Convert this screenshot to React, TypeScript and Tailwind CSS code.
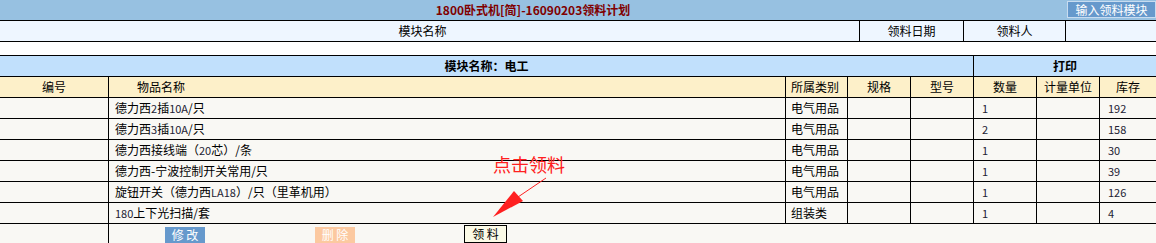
const font = { fontFamily: '"Noto Sans CJK SC", "Noto Sans", sans-serif' };

type Item = { name: React.ReactNode; kind: string; qty: string; stock: string };

const N = ({ children }: { children: React.ReactNode }) => (
  <span className="text-[11px] text-[#223]">{children}</span>
);

const items: Item[] = [
  { name: <>德力西<N>2</N>插<N>10A</N>/只</>, kind: "电气用品", qty: "1", stock: "192" },
  { name: <>德力西<N>3</N>插<N>10A</N>/只</>, kind: "电气用品", qty: "2", stock: "158" },
  { name: <>德力西接线端（<N>20</N>芯）/条</>, kind: "电气用品", qty: "1", stock: "30" },
  { name: <>德力西-宁波控制开关常用/只</>, kind: "电气用品", qty: "1", stock: "39" },
  { name: <>旋钮开关（德力西<N>LA18</N>）/只（里革机用）</>, kind: "电气用品", qty: "1", stock: "126" },
  { name: <><N>180</N>上下光扫描/套</>, kind: "组装类", qty: "1", stock: "4" },
];

export default function App() {
  return (
    <div className="relative w-[1156px] h-[243px] overflow-hidden bg-[#f9f8f4] text-[12px] text-black" style={font}>
      {/* title row */}
      <div className="flex h-[21px] border-b border-black bg-[#97c1e1]">
        <div className="flex-1 flex items-center justify-center font-bold text-[#800000]">
          1800卧式机[简]-16090203领料计划
        </div>
        <div className="w-[90px] pt-[1px] pl-[1px]">
          <div className="h-[17px] border border-[#c8dcf0] bg-[#6699cc] text-white flex items-center justify-center leading-none">
            输入领料模块
          </div>
        </div>
      </div>

      {/* module header */}
      <div className="flex h-[21px] border-b border-black bg-[#eef6ff]">
        <div className="w-[860px] border-r border-black flex items-center justify-center pr-[14px]">模块名称</div>
        <div className="w-[104px] border-r border-black flex items-center justify-center">领料日期</div>
        <div className="w-[102px] border-r border-black flex items-center justify-center">领料人</div>
        <div className="flex-1" />
      </div>

      <div className="h-[14px] border-b border-black bg-white" />

      {/* module name */}
      <div className="flex h-[21px] border-b border-black bg-[#c1e0fc] font-bold">
        <div className="w-[974px] border-r border-black flex items-center justify-center">模块名称：电工</div>
        <div className="flex-1 flex items-center justify-center">打印</div>
      </div>

      {/* column headers */}
      <div className="flex h-[21px] border-b border-black bg-[#fdf0c9]">
        <div className="w-[109px] border-r border-black flex items-center justify-center">编号</div>
        <div className="w-[677px] border-r border-black flex items-center pl-[28px]">物品名称</div>
        <div className="w-[62px] border-r border-black flex items-center pl-[5px]">所属类别</div>
        <div className="w-[63px] border-r border-black flex items-center justify-center">规格</div>
        <div className="w-[63px] border-r border-black flex items-center justify-center">型号</div>
        <div className="w-[63px] border-r border-black flex items-center justify-center">数量</div>
        <div className="w-[63px] border-r border-black flex items-center justify-center">计量单位</div>
        <div className="flex-1 flex items-center justify-center">库存</div>
      </div>

      {items.map((it, i) => (
        <div key={i} className="flex h-[21px] border-b border-black">
          <div className="w-[109px] border-r border-black" />
          <div className="w-[677px] border-r border-black flex items-center pl-[6px]">{it.name}</div>
          <div className="w-[62px] border-r border-black flex items-center pl-[5px]">{it.kind}</div>
          <div className="w-[63px] border-r border-black" />
          <div className="w-[63px] border-r border-black" />
          <div className="w-[63px] border-r border-black flex items-center pl-[8px] text-[11px] text-[#223]">{it.qty}</div>
          <div className="w-[63px] border-r border-black" />
          <div className="flex-1 flex items-center pl-[8px] text-[11px] text-[#223]">{it.stock}</div>
        </div>
      ))}

      {/* actions */}
      <div className="flex h-[20px]">
        <div className="w-[109px] border-r border-black" />
        <div className="flex items-end pb-[1px] pl-[56px]">
          <div className="w-[40px] h-[16px] bg-[#6699cc] text-white flex items-center justify-center leading-none">修 改</div>
          <div className="ml-[110px] w-[40px] h-[16px] bg-[#fcc9a0] text-white flex items-center justify-center leading-none">删 除</div>
          <div className="ml-[109px] w-[43px] h-[18px] border border-black bg-[#fbfae6] flex items-center justify-center leading-none">领 料</div>
        </div>
      </div>

      {/* annotation */}
      <div className="absolute left-[493px] top-[155px] text-[18px] leading-none text-[#ff2020]">点击领料</div>
      <svg className="absolute left-0 top-0" width="1156" height="243">
        <line x1="546" y1="178" x2="518" y2="197" stroke="#ff2020" strokeWidth="1" />
        <polygon points="493,217 514,191 523,201" fill="#ff2020" />
      </svg>
    </div>
  );
}
